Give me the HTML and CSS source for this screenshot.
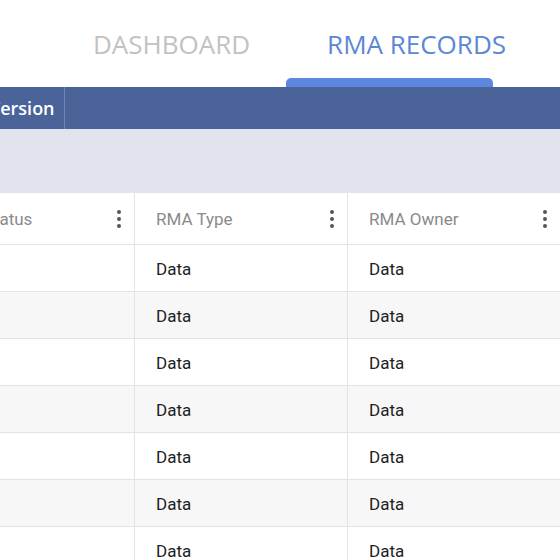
FILE: index.html
```html
<!DOCTYPE html>
<html lang="en">
<head>
    <meta charset="UTF-8">
    <meta name="viewport" content="width=device-width, initial-scale=1.0">
    <title>RMA Records</title>
    <link rel="stylesheet" href="styles.css">
</head>
<body>
    <div class="page">
        <div class="tabs">
            <div class="tab-labels">
                <div class="tab">DASHBOARD</div>
                <div class="tab active">RMA RECORDS</div>
            </div>
            <div class="tab-indicator"></div>
        </div>

        <div class="menu-bar">
            <div class="menu-item">Version</div>
        </div>

        <div class="toolbar"></div>

        <div class="grid">
            <div class="grid-inner">
                <div class="row header">
                    <div class="cell">RMA Status<span class="dots"><i></i><i></i><i></i></span></div>
                    <div class="cell">RMA Type<span class="dots"><i></i><i></i><i></i></span></div>
                    <div class="cell">RMA Owner<span class="dots"><i></i><i></i><i></i></span></div>
                </div>
                <div class="row">
                    <div class="cell"></div>
                    <div class="cell">Data</div>
                    <div class="cell">Data</div>
                </div>
                <div class="row">
                    <div class="cell"></div>
                    <div class="cell">Data</div>
                    <div class="cell">Data</div>
                </div>
                <div class="row">
                    <div class="cell"></div>
                    <div class="cell">Data</div>
                    <div class="cell">Data</div>
                </div>
                <div class="row">
                    <div class="cell"></div>
                    <div class="cell">Data</div>
                    <div class="cell">Data</div>
                </div>
                <div class="row">
                    <div class="cell"></div>
                    <div class="cell">Data</div>
                    <div class="cell">Data</div>
                </div>
                <div class="row">
                    <div class="cell"></div>
                    <div class="cell">Data</div>
                    <div class="cell">Data</div>
                </div>
                <div class="row">
                    <div class="cell"></div>
                    <div class="cell">Data</div>
                    <div class="cell">Data</div>
                </div>
            </div>
        </div>
    </div>
</body>
</html>
```

FILE: styles.css
```css
body {
    margin: 0;
    background: #fff;
    font-family: "Open Sans", Arial, sans-serif;
}
.page {
    width: 560px;
    height: 560px;
    overflow: hidden;
}
.tabs {
    height: 87px;
    display: flex;
    flex-direction: column;
}
.tab-labels {
    height: 78px;
    display: flex;
    padding-left: 93px;
    box-sizing: border-box;
    padding-top: 26px;
    gap: 77px;
}
.tab {
    font-size: 26px;
    line-height: 36px;
    color: #c2c2c2;
}
.tab.active {
    color: #5a87d6;
    font-weight: 500;
}
.tab-indicator {
    margin-left: 286px;
    width: 207px;
    height: 9px;
    background: #5b87dc;
    border-radius: 5px 5px 0 0;
}
.menu-bar {
    height: 42px;
    background: #4a6399;
    display: flex;
}
.menu-item {
    margin-left: -27px;
    padding: 0 9px 0 16px;
    border-right: 1px solid #7084ad;
    color: #fff;
    font-size: 18px;
    font-weight: 600;
    line-height: 42px;
}
.toolbar {
    height: 64px;
    background: #e1e4ec;
}
.grid {
    overflow: hidden;
    font-family: Roboto, Arial, sans-serif;
    font-size: 17px;
}
.grid-inner {
    margin-left: -78px;
}
.row {
    display: flex;
    height: 47px;
    border-bottom: 1px solid #e3e3e3;
    box-sizing: border-box;
}
.row:nth-child(odd) {
    background: #f7f7f7;
}
.row.header {
    height: 52px;
    background: #fff;
}
.cell {
    width: 213px;
    flex-shrink: 0;
    box-sizing: border-box;
    padding: 1px 13px 0 21px;
    border-right: 1px solid #e3e3e3;
    display: flex;
    align-items: center;
    justify-content: space-between;
    color: #1e1e1e;
}
.header .cell {
    color: #8a8a8a;
}
.dots {
    display: flex;
    flex-direction: column;
    gap: 3px;
}
.dots i {
    width: 4px;
    height: 4px;
    border-radius: 50%;
    background: #555;
}
```
